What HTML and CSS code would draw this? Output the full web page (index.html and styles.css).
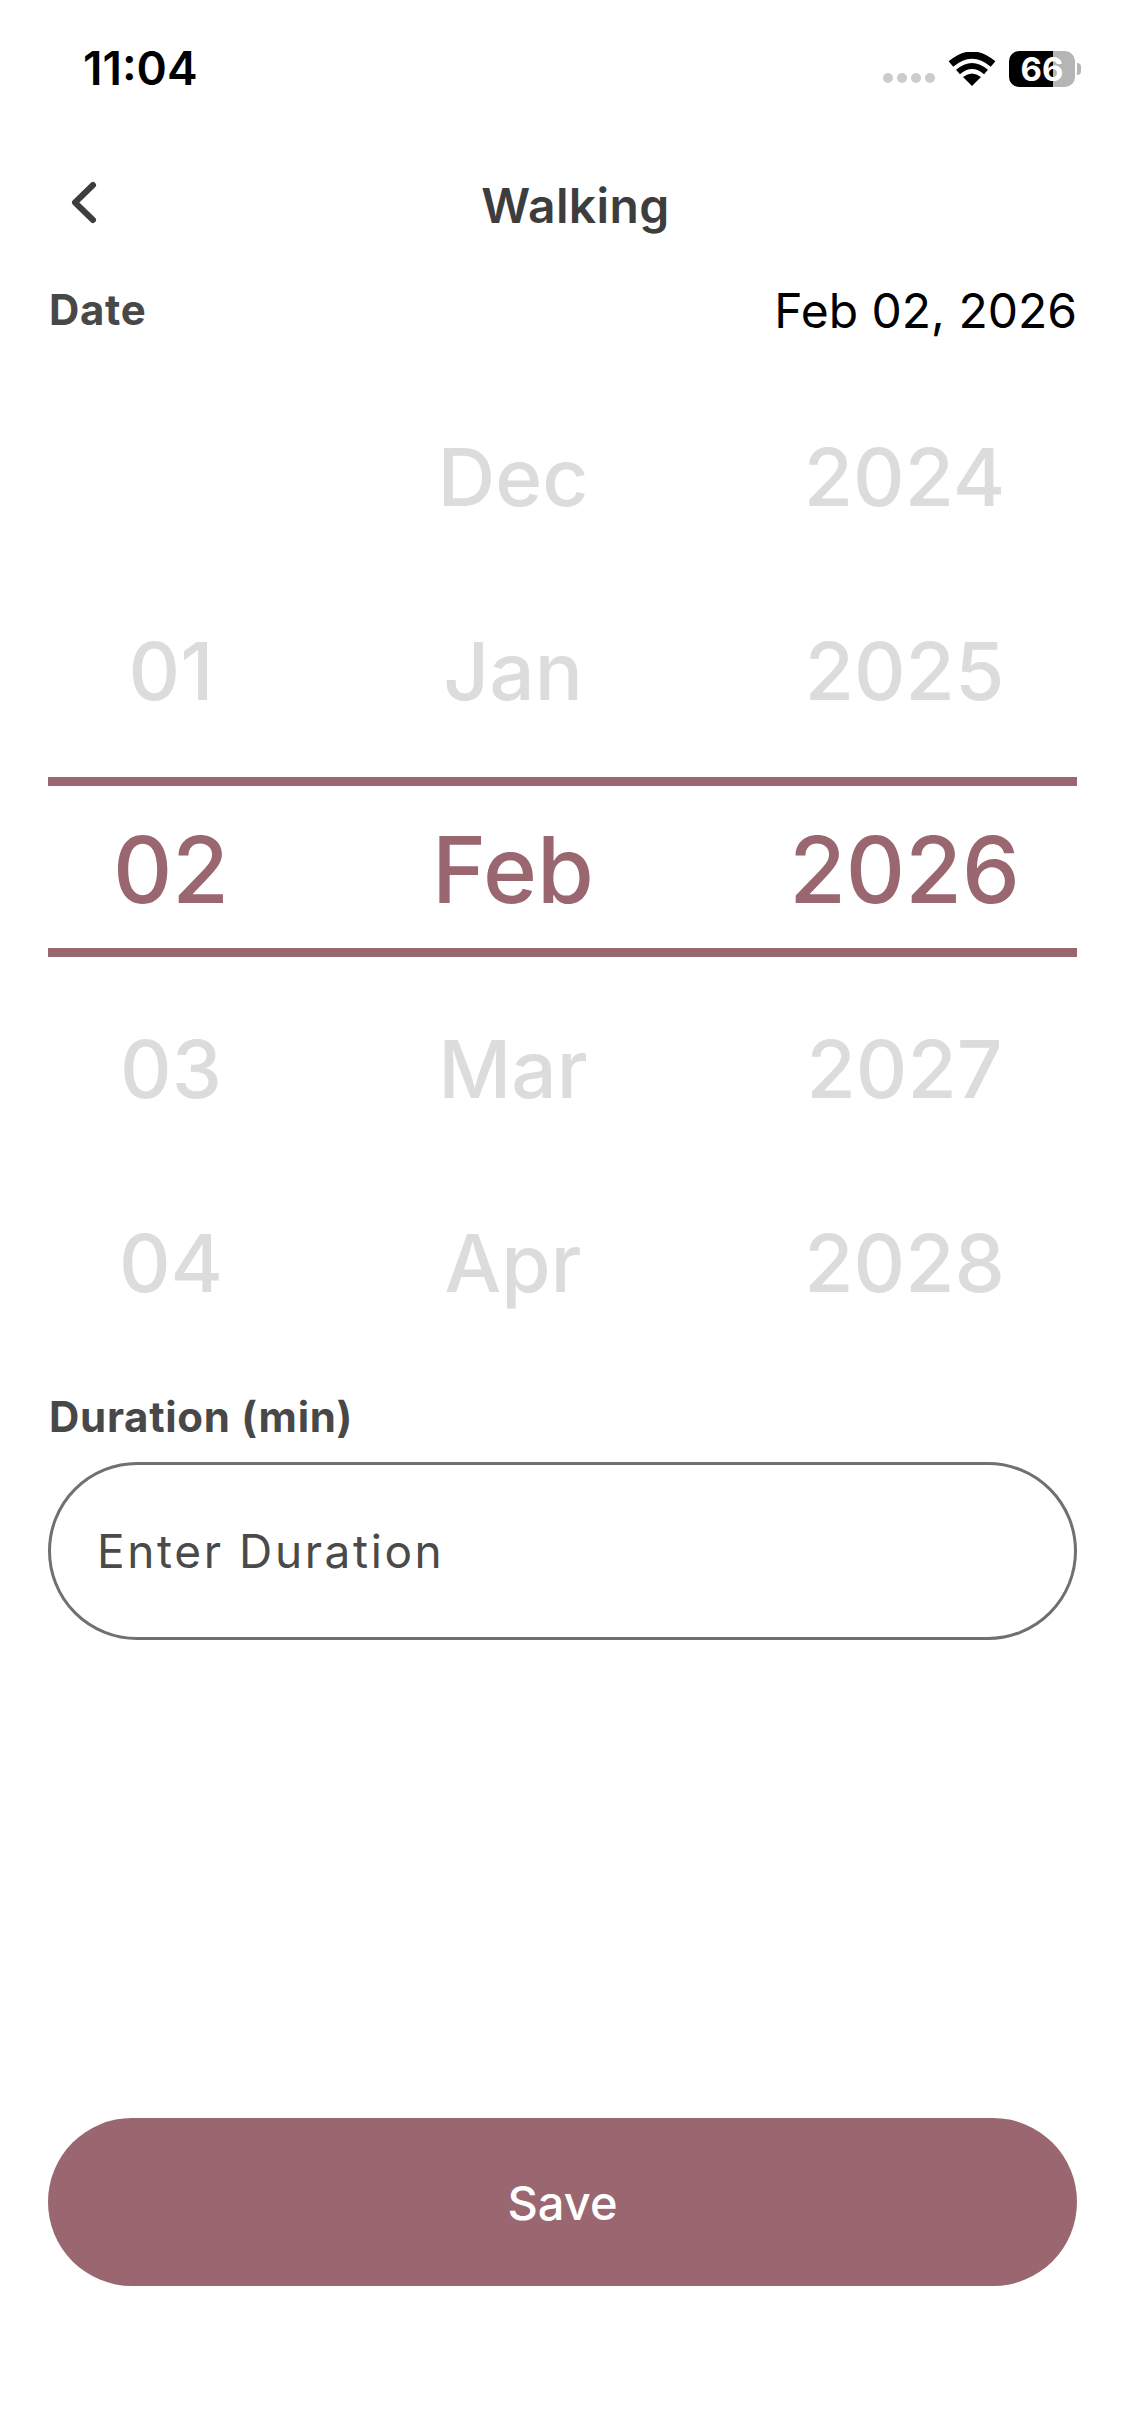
FILE: index.html
```html
<!DOCTYPE html>
<html>
<head>
  <title>Walking</title>
  <link rel="stylesheet" href="styles.css">
</head>
<body>
  <div class="status-bar">
    <span class="time">11:04</span>
    <div class="status-icons">
      <div class="signal"><i></i><i></i><i></i><i></i></div>
      <svg class="wifi" width="46" height="34" viewBox="0 0 46 34">
        <path d="M23 34 L14 25 Q23 18 32 25 Z" fill="#000"/>
        <path d="M9 20 Q23 8 37 20" fill="none" stroke="#000" stroke-width="6"/>
        <path d="M2 12 Q23 -6 44 12" fill="none" stroke="#000" stroke-width="7"/>
      </svg>
      <div class="battery"><span class="battery-level">66</span></div>
      <div class="battery-cap"></div>
    </div>
  </div>

  <div class="nav">
    <svg class="back" width="32" height="48" viewBox="0 0 32 48">
      <path d="M25 7 L7 24.5 L25 42" fill="none" stroke="#3d3d3d" stroke-width="6" stroke-linecap="round" stroke-linejoin="round"/>
    </svg>
    <h1>Walking</h1>
  </div>

  <div class="date-row">
    <span class="label">Date</span>
    <span class="date-value">Feb 02, 2026</span>
  </div>

  <div class="wheel">
    <div class="wheel-row"><span></span><span>Dec</span><span>2024</span></div>
    <div class="wheel-row"><span>01</span><span>Jan</span><span>2025</span></div>
    <div class="wheel-row selected"><span>02</span><span>Feb</span><span>2026</span></div>
    <div class="wheel-row"><span>03</span><span>Mar</span><span>2027</span></div>
    <div class="wheel-row"><span>04</span><span>Apr</span><span>2028</span></div>
  </div>

  <div class="label duration-label">Duration (min)</div>
  <div class="input">Enter Duration</div>

  <div class="save">Save</div>
</body>
</html>
```

FILE: styles.css
```css
* {
  box-sizing: border-box;
}
body {
  margin: 0;
  width: 1125px;
  height: 2436px;
  padding: 0 48px;
  background: #fff;
  color: #3d3d3d;
  font-family: Inter, "Noto Sans", sans-serif;
  overflow: hidden;
}
.status-bar {
  height: 100px;
  margin: 0 -48px;
  padding: 44px 44px 0 83px;
  display: flex;
  justify-content: space-between;
  align-items: flex-start;
}
.time {
  font-size: 46px;
  font-weight: 600;
  line-height: 48px;
  color: #000;
}
.status-icons {
  display: flex;
  align-items: center;
  margin-top: 7px;
}
.signal {
  display: flex;
  gap: 4px;
  margin: 18px 14px 0 0;
}
.signal i {
  width: 10px;
  height: 10px;
  border-radius: 50%;
  background: #ccc;
}
.wifi {
  margin-right: 14px;
}
.battery {
  width: 66px;
  height: 36px;
  border-radius: 10px;
  background: linear-gradient(to right, #000 66%, #b5b5b5 66%);
  text-align: center;
}
.battery-level {
  font-size: 33px;
  font-weight: 700;
  line-height: 36px;
  color: #fff;
}
.battery-cap {
  width: 4px;
  height: 12px;
  margin-left: 2px;
  border-radius: 0 4px 4px 0;
  background: #b5b5b5;
}
.nav {
  height: 70px;
  margin-top: 70px;
  position: relative;
  display: flex;
  align-items: center;
  justify-content: center;
}
.back {
  position: absolute;
  left: 20px;
  top: 8px;
}
h1 {
  margin: 0;
  font-size: 48px;
  font-weight: 600;
  letter-spacing: .4px;
  color: #3d3d3d;
  transform: translateX(13px);
}
.date-row {
  margin-top: 40px;
  display: flex;
  justify-content: space-between;
  align-items: center;
  height: 60px;
}
.label {
  padding-left: 1px;
  font-size: 42px;
  font-weight: 700;
  line-height: 50px;
  letter-spacing: .7px;
  color: #484848;
}
.date-value {
  font-size: 48px;
  color: #000;
}
.wheel {
  margin-top: 39px;
}
.wheel-row {
  display: grid;
  grid-template-columns: 246px 438px 345px;
  height: 194px;
  align-items: center;
  text-align: center;
  font-size: 80px;
  font-weight: 500;
  color: #dcdcdc;
}
.wheel-row.selected {
  height: 180px;
  margin: 10px 0 14px;
  padding-top: 4px;
  font-size: 92px;
  color: #9a6670;
  border-top: 9px solid #9a6670;
  border-bottom: 9px solid #9a6670;
}
.duration-label {
  margin-top: 33px;
}
.input {
  margin-top: 20px;
  height: 178px;
  padding: 0 46px;
  display: flex;
  align-items: center;
  border: 3px solid #707070;
  border-radius: 89px;
  font-size: 46px;
  letter-spacing: 2.6px;
  color: #4a4a4a;
}
.save {
  margin-top: 478px;
  height: 168px;
  display: flex;
  align-items: center;
  justify-content: center;
  border-radius: 84px;
  background: #9a6670;
  color: #fff;
  font-size: 47px;
  font-weight: 500;
}
```
